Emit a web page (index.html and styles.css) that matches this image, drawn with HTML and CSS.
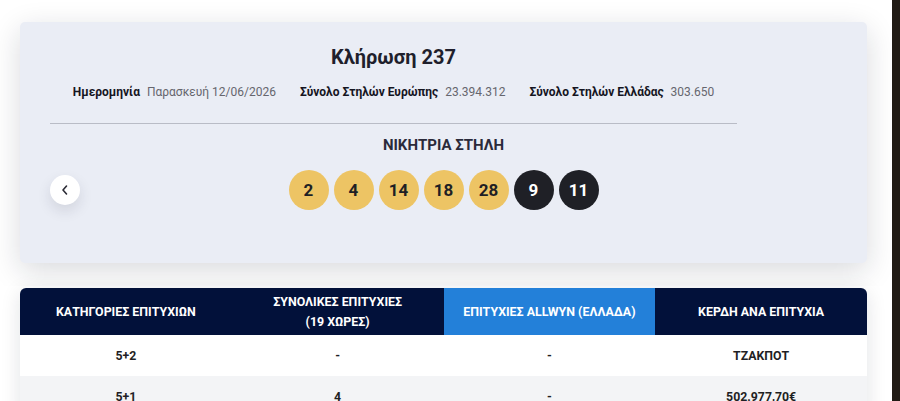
FILE: index.html
```html
<!DOCTYPE html>
<html lang="el">
<head>
  <meta charset="UTF-8">
  <title>Κλήρωση 237</title>
  <meta name="viewport" content="width=device-width, initial-scale=1.0">
  <link rel="stylesheet" href="styles.css">
</head>
<body>
  <div class="page">
    <main class="content">
      <!-- κάρτα κλήρωσης -->
      <section class="draw-section">
        <div class="draw-card">
          <div class="draw-head">
            <h1>Κλήρωση 237</h1>
            <div class="meta">
              <span class="meta-item"><b>Ημερομηνία</b> Παρασκευή 12/06/2026</span>
              <span class="meta-item"><b>Σύνολο Στηλών Ευρώπης</b> 23.394.312</span>
              <span class="meta-item"><b>Σύνολο Στηλών Ελλάδας</b> 303.650</span>
            </div>
            <hr class="divider">
          </div>

          <div class="winning">
            <div class="winning-label">ΝΙΚΗΤΡΙΑ ΣΤΗΛΗ</div>
            <button class="nav-btn" aria-label="Προηγούμενη">
              <svg width="10" height="12" viewBox="0 0 10 12"><path d="M6.5 2 L3 6 L6.5 10" fill="none" stroke="#2b2b35" stroke-width="1.6" stroke-linecap="round" stroke-linejoin="round"/></svg>
            </button>
            <div class="balls">
              <span class="ball">2</span>
              <span class="ball">4</span>
              <span class="ball">14</span>
              <span class="ball">18</span>
              <span class="ball">28</span>
              <span class="ball star">9</span>
              <span class="ball star">11</span>
            </div>
          </div>
        </div>
      </section>

      <!-- πίνακας επιτυχιών -->
      <section class="results-section">
        <table class="results">
          <thead>
            <tr>
              <th>ΚΑΤΗΓΟΡΙΕΣ ΕΠΙΤΥΧΙΩΝ</th>
              <th>ΣΥΝΟΛΙΚΕΣ ΕΠΙΤΥΧΙΕΣ<br>(19 ΧΩΡΕΣ)</th>
              <th class="local">ΕΠΙΤΥΧΙΕΣ ALLWYN (ΕΛΛΑΔΑ)</th>
              <th>ΚΕΡΔΗ ΑΝΑ ΕΠΙΤΥΧΙΑ</th>
            </tr>
          </thead>
          <tbody>
            <tr>
              <td>5+2</td>
              <td>-</td>
              <td>-</td>
              <td>ΤΖΑΚΠΟΤ</td>
            </tr>
            <tr>
              <td>5+1</td>
              <td>4</td>
              <td>-</td>
              <td>502.977,70€</td>
            </tr>
          </tbody>
        </table>
      </section>
    </main>
    <div class="edge"></div>
  </div>
</body>
</html>
```

FILE: styles.css
```css
/* βασική διάταξη */
body {
  margin: 0;
  padding: 0;
  background-color: #FFFFFF;
  font-family: Roboto, 'Liberation Sans', sans-serif;
  color: #1c1c2b;
}

.page {
  display: flex;
  height: 401px;
  overflow: hidden;
}

.content {
  flex: 1;
  min-width: 0;
}

.edge {
  width: 8px;
  background-color: #211b15;
}

/* κάρτα κλήρωσης */
.draw-section {
  padding: 22px 25px 23px 20px;
  background-color: #FFFFFF;
}

.draw-card {
  background-color: #EAEDF5;
  border-radius: 5px;
  padding: 23px 30px 53px;
  box-shadow: 0 8px 30px rgba(20, 25, 45, 0.16);
}

.draw-head {
  width: 687px;
  text-align: center;
}

h1 {
  margin: 0;
  font-size: 20px;
  line-height: 24px;
  font-weight: 700;
  color: #1f1f2c;
}

.meta {
  display: flex;
  justify-content: center;
  gap: 24px;
  margin-top: 15px;
  font-size: 12px;
  line-height: 16px;
  color: #66666e;
}

.meta b {
  color: #15151f;
  font-weight: 700;
  margin-right: 4px;
}

.divider {
  margin: 23px 0 0;
  border: none;
  border-top: 1px solid #B9BCC6;
}

/* νικητήρια στήλη */
.winning {
  display: grid;
  grid-template-columns: 30px 1fr 30px;
  align-items: center;
  margin-top: 12px;
}

.winning-label {
  grid-column: 2;
  text-align: center;
  font-size: 15px;
  line-height: 18px;
  font-weight: 700;
  color: #2a2a3a;
  margin-bottom: 16px;
}

.nav-btn {
  grid-column: 1;
  grid-row: 2;
  width: 30px;
  height: 30px;
  padding: 0;
  border: none;
  border-radius: 50%;
  background-color: #FFFFFF;
  box-shadow: 0 6px 14px rgba(30, 35, 60, 0.12);
  display: flex;
  align-items: center;
  justify-content: center;
  cursor: pointer;
}

.balls {
  grid-column: 2;
  grid-row: 2;
  display: flex;
  justify-content: center;
  gap: 5px;
}

.ball {
  width: 40px;
  height: 40px;
  border-radius: 50%;
  background-color: #EDC464;
  color: #1f1f24;
  display: flex;
  align-items: center;
  justify-content: center;
  font-size: 17px;
  font-weight: 700;
}

.ball.star {
  background-color: #1F2026;
  color: #FFFFFF;
}

/* πίνακας επιτυχιών */
.results-section {
  padding: 2px 25px 0 20px;
  background-color: #FFFFFF;
}

.results {
  width: 100%;
  table-layout: fixed;
  border-collapse: separate;
  border-spacing: 0;
  box-shadow: 0 4px 20px rgba(20, 25, 45, 0.12);
  border-radius: 6px 6px 0 0;
}

.results th {
  height: 47px;
  padding: 0 10px;
  background-color: #02113A;
  color: #FFFFFF;
  font-size: 12.4px;
  line-height: 20px;
  font-weight: 700;
  text-align: center;
}

.results th:first-child {
  border-top-left-radius: 6px;
}

.results th:last-child {
  border-top-right-radius: 6px;
}

.results th.local {
  background-color: #2380D9;
}

.results td {
  height: 41px;
  padding: 0 10px;
  text-align: center;
  font-size: 12.3px;
  font-weight: 700;
  color: #1f1f24;
  background-color: #FFFFFF;
}

.results tbody tr:nth-child(even) td {
  background-color: #F3F4F6;
}
```
